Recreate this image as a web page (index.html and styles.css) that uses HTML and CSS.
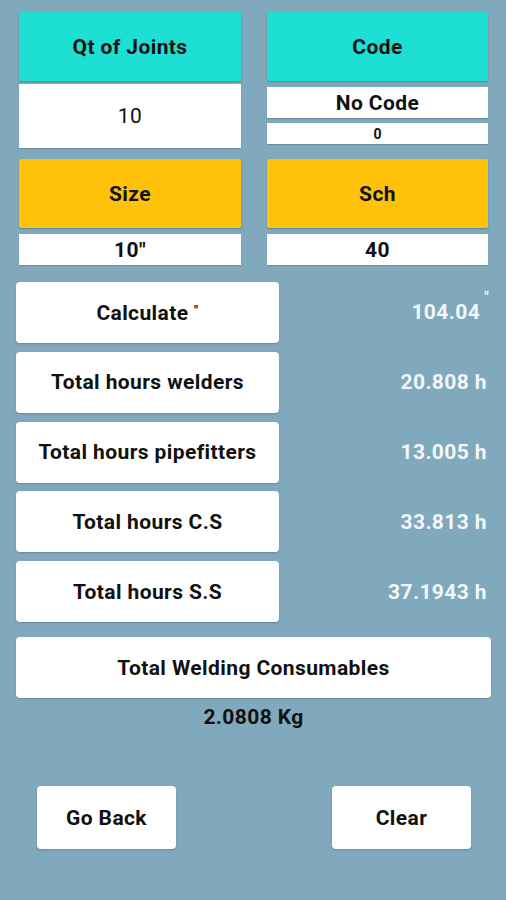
FILE: index.html
```html
<!doctype html>
<html lang="en">
<head>
    <meta charset="utf-8">
    <meta name="viewport" content="width=device-width, initial-scale=1">
    <link rel="stylesheet" href="styles.css">
    <title>Welding hours</title>
</head>
<body>
    <main class="screen">
        <!-- inputs -->
        <section class="inputs">
            <div class="head teal">Qt of Joints</div>
            <div class="head teal">Code</div>

            <div class="cell">
                <div class="box joints">10</div>
            </div>
            <div class="cell code-cell">
                <div class="box code">No Code</div>
                <div class="box code-num">0</div>
            </div>

            <div class="head amber">Size</div>
            <div class="head amber">Sch</div>

            <div class="cell">
                <div class="box small-val">10"</div>
            </div>
            <div class="cell">
                <div class="box small-val">40</div>
            </div>
        </section>

        <!-- results -->
        <section class="results">
            <div class="row">
                <button class="btn">Calculate <span class="quote">"</span></button>
                <span class="value">104.04<span class="unit">"</span></span>
            </div>
            <div class="row">
                <button class="btn">Total hours welders</button>
                <span class="value">20.808 h</span>
            </div>
            <div class="row">
                <button class="btn">Total hours pipefitters</button>
                <span class="value">13.005 h</span>
            </div>
            <div class="row">
                <button class="btn">Total hours C.S</button>
                <span class="value">33.813 h</span>
            </div>
            <div class="row">
                <button class="btn">Total hours S.S</button>
                <span class="value">37.1943 h</span>
            </div>
        </section>

        <section class="consumables">
            <button class="btn wide">Total Welding Consumables</button>
            <p class="kg">2.0808 Kg</p>
        </section>

        <footer class="actions">
            <button class="btn action">Go Back</button>
            <button class="btn action">Clear</button>
        </footer>
    </main>
</body>
</html>
```

FILE: styles.css
```css
html, body {
    height: 100%;
}
body {
    margin: 0;
    padding: 0;
    background: #80a9bd;
    font-family: Roboto, "Liberation Sans", sans-serif;
    color: #111;
}
.screen {
    padding-top: 12px;
}

/* inputs grid */
.inputs {
    display: grid;
    grid-template-columns: 222px 221px;
    grid-template-rows: 69px 78px 69px auto;
    column-gap: 26px;
    padding: 0 18px 0 19px;
}
.head {
    display: flex;
    align-items: center;
    justify-content: center;
    font-size: 21px;
    letter-spacing: .4px;
    font-weight: 700;
    border-radius: 2px;
    box-shadow: 0 1px 2px rgba(0, 0, 0, .25);
}
.teal {
    background: #1ddfd4;
}
.amber {
    background: #ffc20b;
}
.cell {
    display: flex;
    flex-direction: column;
}
.box {
    background: #fff;
    display: flex;
    align-items: center;
    justify-content: center;
    box-shadow: 0 1px 1px rgba(0, 0, 0, .15);
}
.joints {
    margin-top: 3px;
    height: 64px;
    font-size: 21px;
    letter-spacing: .4px;
}
.code-cell {
    padding-top: 6px;
    gap: 5px;
}
.code {
    height: 31px;
    font-size: 21px;
    letter-spacing: .4px;
    font-weight: 700;
}
.code-num {
    height: 21px;
    font-size: 14px;
    font-weight: 700;
}
.small-val {
    margin-top: 6px;
    height: 31px;
    font-size: 21px;
    letter-spacing: .4px;
    font-weight: 700;
}

/* results */
.btn {
    border: none;
    background: #fff;
    border-radius: 4px;
    font-family: inherit;
    font-size: 21px;
    letter-spacing: .4px;
    font-weight: 700;
    color: #111;
    padding: 0;
    box-shadow: 0 1px 2px rgba(0, 0, 0, .2);
}
.results {
    margin-top: 17px;
    padding: 0 19px 0 16px;
    display: flex;
    flex-direction: column;
    gap: 8.75px;
}
.row {
    display: flex;
    align-items: center;
}
.row .btn {
    width: 263px;
    height: 61px;
}
.quote {
    font-size: 13px;
    vertical-align: 5px;
}
.value {
    flex: 1;
    text-align: right;
    color: #f3f7f9;
    font-size: 21px;
    line-height: 24px;
    letter-spacing: .4px;
    font-weight: 700;
}
.unit {
    position: relative;
    top: -17px;
    margin-left: 4px;
    margin-right: -2px;
    font-size: 14px;
}

.consumables {
    margin-top: 15px;
    padding: 0 15px 0 16px;
}
.wide {
    width: 100%;
    height: 61px;
}
.kg {
    margin: 7px 0 0;
    text-align: center;
    font-size: 21px;
    letter-spacing: .4px;
    font-weight: 700;
    line-height: 24px;
}

.actions {
    margin-top: 57px;
    display: flex;
    justify-content: space-between;
    padding: 0 35px 0 37px;
}
.action {
    width: 139px;
    height: 63px;
}
```
